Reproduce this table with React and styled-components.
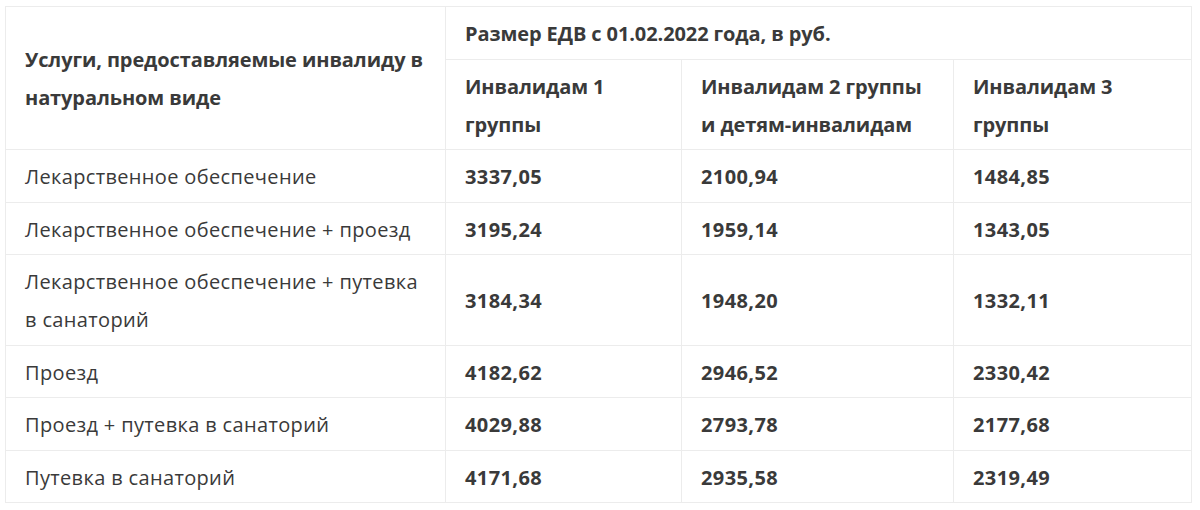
import React from "react";
import styled, { createGlobalStyle } from "styled-components";

const GlobalStyle = createGlobalStyle`
  html, body { margin: 0; padding: 0; background: #fff; }
  body { padding: 6px 9px 0 5px; }
`;

const Table = styled.table`
  width: 1186px;
  border-collapse: collapse;
  table-layout: fixed;
  font-family: "Open Sans", "Noto Sans", sans-serif;
  font-size: 20px;
  line-height: 38px;
  color: #3a3a3a;
`;

const Cell = styled.td`
  border: 1px solid #ececec;
  padding: 8px 19px 5.5px 19px;
  vertical-align: middle;
  text-align: left;
  font-weight: ${(p) => (p.$bold ? 700 : 400)};
  letter-spacing: ${(p) => (p.$bold ? "0.4px" : "0.35px")};
`;

const HeadCell = styled.th`
  border: 1px solid #ececec;
  padding: 8px 19px 5.5px 19px;
  vertical-align: middle;
  text-align: left;
  font-weight: 700;
  letter-spacing: -0.1px;
`;

const widths = [440, 236, 272, 238];

const rows = [
  ["Лекарственное обеспечение", "3337,05", "2100,94", "1484,85"],
  ["Лекарственное обеспечение + проезд", "3195,24", "1959,14", "1343,05"],
  ["Лекарственное обеспечение + путевка в санаторий", "3184,34", "1948,20", "1332,11"],
  ["Проезд", "4182,62", "2946,52", "2330,42"],
  ["Проезд + путевка в санаторий", "4029,88", "2793,78", "2177,68"],
  ["Путевка в санаторий", "4171,68", "2935,58", "2319,49"],
];

export default function App() {
  return (
    <>
      <GlobalStyle />
      <Table>
        <colgroup>
          {widths.map((w, i) => (
            <col key={i} style={{ width: w }} />
          ))}
        </colgroup>
        <thead>
          <tr>
            <HeadCell rowSpan={2}>Услуги, предоставляемые инвалиду в натуральном виде</HeadCell>
            <HeadCell colSpan={3}>Размер ЕДВ с 01.02.2022 года, в руб.</HeadCell>
          </tr>
          <tr>
            <HeadCell>Инвалидам 1 группы</HeadCell>
            <HeadCell>Инвалидам 2 группы и детям-инвалидам</HeadCell>
            <HeadCell>Инвалидам 3 группы</HeadCell>
          </tr>
        </thead>
        <tbody>
          {rows.map((r) => (
            <tr key={r[0]}>
              <Cell>{r[0]}</Cell>
              <Cell $bold>{r[1]}</Cell>
              <Cell $bold>{r[2]}</Cell>
              <Cell $bold>{r[3]}</Cell>
            </tr>
          ))}
        </tbody>
      </Table>
    </>
  );
}
